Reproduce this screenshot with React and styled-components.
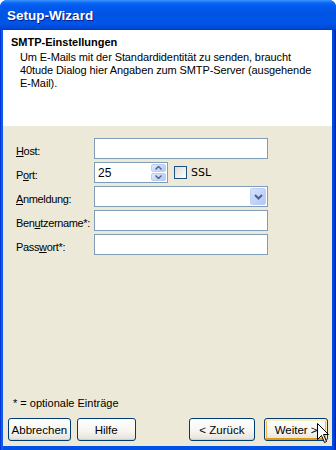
import styled, { createGlobalStyle } from "styled-components";

const Global = createGlobalStyle`
  html, body { margin: 0; padding: 0; background: #fff; }
  body { font-family: "Liberation Sans", Arial, sans-serif; font-size: 11px; color: #000; }
`

const Window = styled.div`
  position: relative;
  width: 336px;
  height: 450px;
  display: flex;
  flex-direction: column;
  box-sizing: border-box;
  border-radius: 7px 7px 0 0;
  background: linear-gradient(90deg, #0019cf 0px, #0855dd 1px, #1a63ee 2px, #0051e6 3px, #0051e6 calc(100% - 4px), #0040d6 calc(100% - 2px), #001ea0 100%);
  overflow: hidden;
`

const TitleBar = styled.div`
  height: 30px;
  flex: none;
  display: flex;
  align-items: center;
  padding: 1px 0 0 7px;
  box-sizing: border-box;
  background: linear-gradient(180deg, #3d95ff 0px, #0a66f2 3px, #0058ee 7px, #0054e3 16px, #0055e8 24px, #0049d6 28px, #003dc0 30px);
  color: #fff;
  font-family: "Liberation Sans", Arial, sans-serif;
  font-weight: bold;
  font-size: 13.5px;
  text-shadow: 1px 1px 0 #0a1e8c;
`

const Client = styled.div`
  flex: 1;
  display: flex;
  flex-direction: column;
  margin: 0 4px 4px 3px;
`

const Header = styled.div`
  height: 96px;
  flex: none;
  background: #fff;
  padding: 6px 8px 0 8px;
  box-sizing: border-box;
`

const HeaderTitle = styled.div`
  font-weight: bold;
  font-size: 11px;
  line-height: 13px;
`

const HeaderText = styled.p`
  margin: 2px 0 0 9px;
  line-height: 13px;
  white-space: nowrap;
  letter-spacing: -0.1px;
`

const Body = styled.div`
  flex: 1;
  display: flex;
  flex-direction: column;
  background: #ece9d8;
  border-top: 1px solid #ece9d8;
  padding: 11px 4px 5px 5px;
`

const Form = styled.div`
  display: grid;
  grid-template-columns: 78px 174px;
  grid-auto-rows: 21px;
  row-gap: 3px;
  padding-left: 8px;
`

const Label = styled.label`
  display: flex;
  align-items: center;
  padding-top: 4px;
  letter-spacing: -0.35px;
  white-space: nowrap;
  u { text-decoration: underline; }
`

const Field = styled.div`
  box-sizing: border-box;
  height: 21px;
  width: ${p => p.$w || 174}px;
  border: 1px solid #7f9db9;
  background: #fff;
  display: flex;
  align-items: center;
  padding: 0 1px 0 3px;
  font-size: 12px;
`

const Value = styled.span`
  flex: 1;
`

const Spin = styled.div`
  width: 15px;
  height: 17px;
  display: flex;
  flex-direction: column;
  gap: 1px;
`

const SpinHalf = styled.div`
  flex: 1;
  border-radius: 2px;
  background: linear-gradient(135deg, #dfe8fc, #b5c8f6);
  border: 1px solid #bccdf6;
  display: flex;
  align-items: center;
  justify-content: center;
`

const DropBtn = styled.div`
  width: 16px;
  height: 17px;
  border-radius: 2px;
  background: linear-gradient(135deg, #d6e1fd, #b3c6f7);
  border: 1px solid #bed0f7;
  box-sizing: border-box;
  display: flex;
  align-items: center;
  justify-content: center;
`

const PortRow = styled.div`
  display: flex;
  align-items: center;
  gap: 6px;
`

const Check = styled.div`
  width: 13px;
  height: 13px;
  box-sizing: border-box;
  border: 1px solid #1c5180;
  background: linear-gradient(135deg, #dcdcd5, #fff);
`

const CheckText = styled.span`
  font-family: "DejaVu Sans", sans-serif;
  font-size: 11px;
  margin-left: -2px;
`

const Spacer = styled.div`
  flex: 1;
`

const Note = styled.div`
  padding-left: 5px;
  margin-bottom: 8px;
  line-height: 13px;
`

const ButtonRow = styled.div`
  display: flex;
  gap: 6px;
`

const Button = styled.button`
  height: 23px;
  width: ${p => p.$w}px;
  box-sizing: border-box;
  margin-left: ${p => p.$ml || 0}px;
  border: 1px solid #003c74;
  border-radius: 3px;
  background: linear-gradient(180deg, #fff 0%, #f5f4ef 60%, #e3e1d6 100%);
  font-family: "Liberation Sans", Arial, sans-serif;
  font-size: 11.5px;
  color: #000;
  padding: 0;
  box-shadow: ${p => p.$focus
    ? "inset 0 1px 0 1px #ffecb8, inset 0 -1px 0 1px #e5970f, inset 0 0 0 2px #f8b846"
    : "inset 0 -1px 0 #d6d0c5"};
`

const Cursor = styled.svg`
  position: absolute;
  left: 317px;
  top: 423px;
`

const Up = () => (
  <svg width="7" height="4" viewBox="0 0 7 4"><path d="M0.5 3.5 L3.5 0.5 L6.5 3.5" fill="none" stroke="#4d6185" strokeWidth="1.4" /></svg>
)
const Down = () => (
  <svg width="7" height="4" viewBox="0 0 7 4"><path d="M0.5 0.5 L3.5 3.5 L6.5 0.5" fill="none" stroke="#4d6185" strokeWidth="1.4" /></svg>
)

export default function App() {
  return (
    <>
      <Global />
      <Window>
        <TitleBar>Setup-Wizard</TitleBar>
        <Client>
          <Header>
            <HeaderTitle>SMTP-Einstellungen</HeaderTitle>
            <HeaderText>
              Um E-Mails mit der Standardidentität zu senden, braucht<br />
              40tude Dialog hier Angaben zum SMTP-Server (ausgehende<br />
              E-Mail).
            </HeaderText>
          </Header>
          <Body>
            <Form>
              <Label><span><u>H</u>ost:</span></Label>
              <Field />
              <Label><span>P<u>o</u>rt:</span></Label>
              <PortRow>
                <Field $w={74}>
                  <Value>25</Value>
                  <Spin>
                    <SpinHalf><Up /></SpinHalf>
                    <SpinHalf><Down /></SpinHalf>
                  </Spin>
                </Field>
                <Check />
                <CheckText>SSL</CheckText>
              </PortRow>
              <Label><span><u>A</u>nmeldung:</span></Label>
              <Field>
                <Value />
                <DropBtn>
                  <svg width="9" height="6" viewBox="0 0 9 6"><path d="M1 1 L4.5 4.5 L8 1" fill="none" stroke="#4d6185" strokeWidth="2" /></svg>
                </DropBtn>
              </Field>
              <Label><span>Ben<u>u</u>tzername*:</span></Label>
              <Field />
              <Label><span>Pass<u>w</u>ort*:</span></Label>
              <Field />
            </Form>
            <Spacer />
            <Note>* = optionale Einträge</Note>
            <ButtonRow>
              <Button $w={63}>Abbrechen</Button>
              <Button $w={59}>Hilfe</Button>
              <Button $w={67} $ml={47}>&lt; Zurück</Button>
              <Button $w={64} $ml={3} $focus>Weiter &gt;</Button>
            </ButtonRow>
          </Body>
        </Client>
        <Cursor width="13" height="22" viewBox="0 0 13 22">
          <path d="M0.5 0.5 L0.5 16.5 L4.5 12.5 L7.5 19.5 L9.5 18.5 L6.5 11.5 L11.5 11.5 Z" fill="#fff" stroke="#000" strokeWidth="1" />
        </Cursor>
      </Window>
    </>
  )
}
